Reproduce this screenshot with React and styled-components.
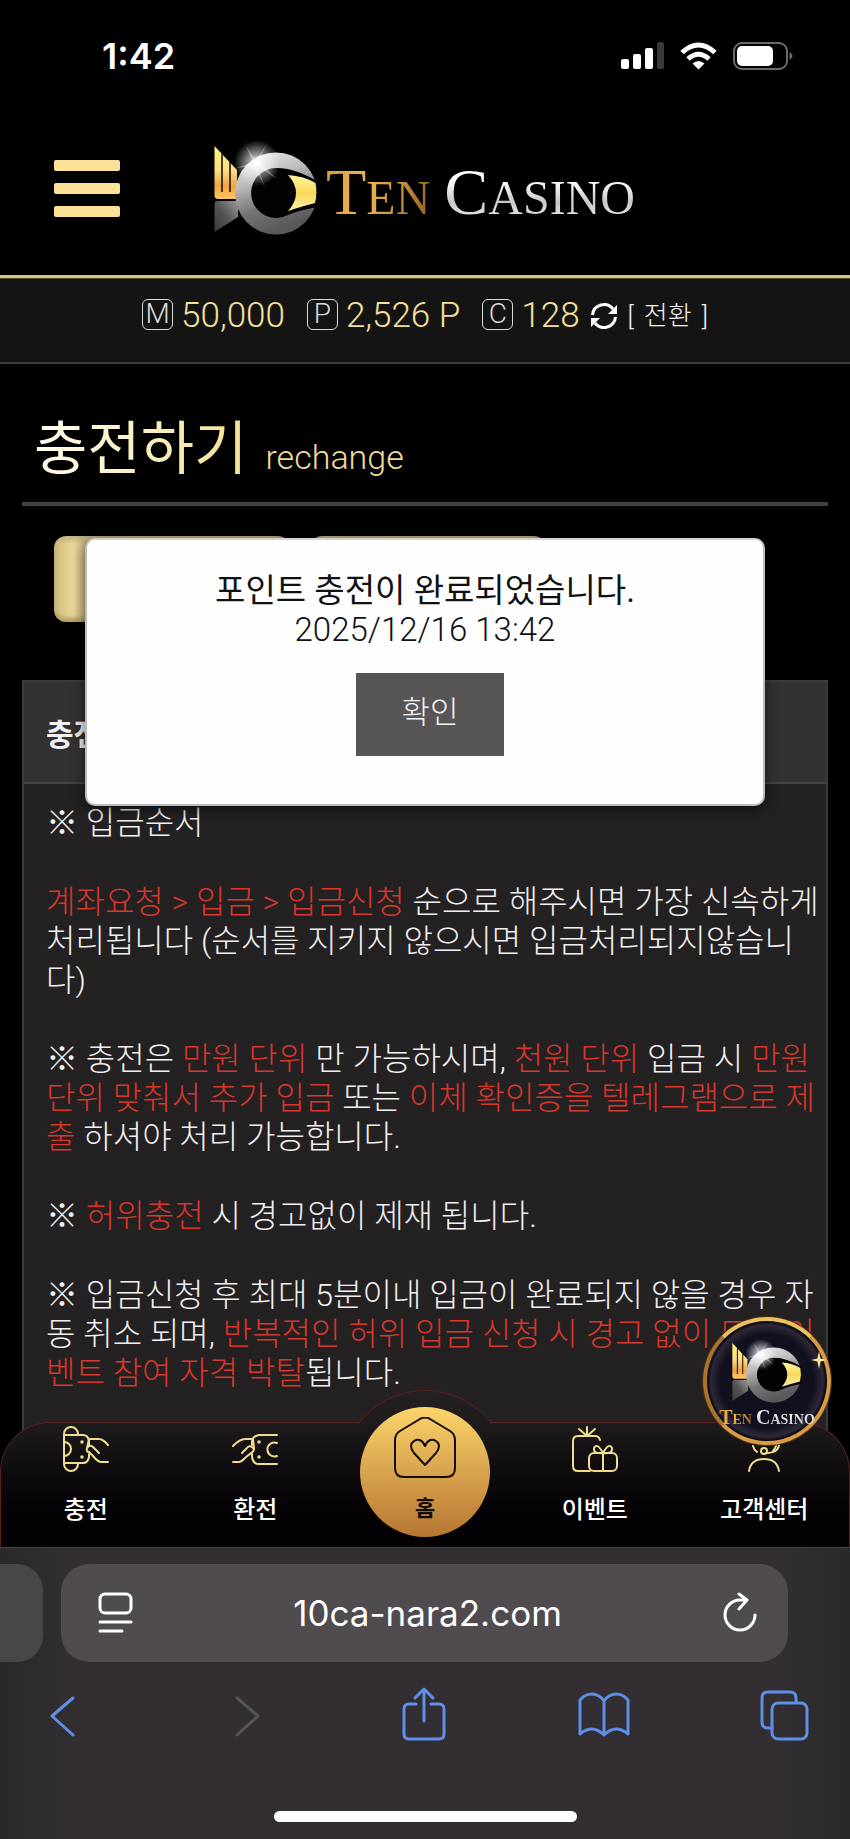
import React, { useId } from "react";
import styled, { createGlobalStyle, css } from "styled-components";

const Global = createGlobalStyle`
  *, *::before, *::after { box-sizing: border-box; }
  body { margin: 0; background: #000; }
  button { font: inherit; border: 0; padding: 0; background: none; color: inherit; cursor: pointer; }
  a { color: inherit; text-decoration: none; }
  h1, h2, p, dl, dd, dt { margin: 0; font-weight: inherit; font-size: inherit; }
  svg { display: block; }
`;

const korean = `"Noto Sans CJK KR", sans-serif`;
const latin = `Roboto, "Noto Sans CJK KR", sans-serif`;
const system = `Inter, sans-serif`;

const Page = styled.div`
  display: flex;
  flex-direction: column;
  min-height: 100vh;
  background: #000;
  color: #f2f0f1;
  font-family: ${korean};
`;

const Site = styled.div`
  position: relative;
  flex: 1;
  display: flex;
  flex-direction: column;
  overflow: hidden;
`;

/* ---------- phone status bar ---------- */
const StatusBar = styled.div`
  display: flex;
  align-items: center;
  justify-content: space-between;
  height: 112px;
  padding: 0 56px 0 102px;
  color: #fff;
  font: 600 36px/44px ${system};
`;

const StatusIcons = styled.div`
  display: flex;
  align-items: center;
  gap: 16px;
`;

/* ---------- site header ---------- */
const Header = styled.header`
  position: relative;
  display: flex;
  align-items: center;
  gap: 90px;
  height: 166px;
  padding: 0 54px 10px;
  border-bottom: 3px solid #d3c58a;
  box-shadow: 0 1px 0 #4d4529;
`;

const MenuButton = styled.button`
  display: flex;
  flex-direction: column;
  gap: 12px;
  width: 66px;
`;

const MenuBar = styled.span`
  height: 11px;
  border-radius: 2px;
  background: #fbe297;
`;

const Brand = styled.a`
  display: flex;
  align-items: center;
  gap: 4px;
`;

const BrandName = styled.span`
  display: flex;
  align-items: baseline;
  gap: ${(p) => (p.$small ? 4 : 14)}px;
  padding-top: ${(p) => (p.$small ? 0 : 12)}px;
  font-family: "Liberation Serif", serif;
  font-size: ${(p) => (p.$small ? 14 : 48)}px;
  font-weight: ${(p) => (p.$small ? 700 : 400)};
  line-height: ${(p) => (p.$small ? 20 : 66)}px;
  text-transform: uppercase;
  big { font-size: ${(p) => (p.$small ? 20 : 66)}px; }
`;

const BrandWord = styled.span`
  background: ${(p) =>
    p.$gold
      ? "linear-gradient(100deg, #d99a3a, #f1b750 40%, #93601f)"
      : "linear-gradient(180deg, #fff 30%, #c9c9cd 60%, #fff)"};
  background-clip: text;
  -webkit-background-clip: text;
  color: transparent;
`;

/* ---------- balances ---------- */
const BalanceBar = styled.dl`
  display: flex;
  align-items: center;
  justify-content: center;
  height: 86px;
  padding-bottom: 8px;
  background: #151415;
  border-bottom: 2px solid #3b3a3b;
  font-family: ${latin};
  font-weight: 300;
`;

const BalanceKey = styled.dt`
  display: flex;
  align-items: center;
  justify-content: center;
  width: 31px;
  height: 31px;
  margin-bottom: 4px;
  border: 1px solid #dcdadb;
  border-radius: 6px;
  color: #dcdadb;
  font-size: 28px;
  line-height: 28px;
`;

const BalanceValue = styled.dd`
  padding: 0 22px 0 8px;
  color: #f3e09a;
  font-size: 35px;
  line-height: 40px;
  font-weight: 300;
  &:last-of-type { padding-right: 10px; }
`;

const ConvertButton = styled.button`
  display: flex;
  align-items: center;
  gap: 10px;
  font-size: 26px;
  line-height: 36px;
  white-space: nowrap;
`;

/* ---------- page body ---------- */
const Main = styled.main`
  position: relative;
  flex: 1;
  display: flex;
  flex-direction: column;
  padding: 44px 22px 0;
`;

const TitleRow = styled.div`
  display: flex;
  align-items: baseline;
  gap: 18px;
  height: 98px;
  padding-left: 12px;
  border-bottom: 4px solid #424142;
`;

const Title = styled.h1`
  font-size: 58px;
  font-weight: 400;
  line-height: 72px;
  background: linear-gradient(90deg, #fffdf0, #f3e193);
  background-clip: text;
  -webkit-background-clip: text;
  color: transparent;
`;

const Subtitle = styled.span`
  color: #efdb9d;
  font-family: ${latin};
  font-size: 34px;
  font-weight: 300;
`;

const TabRow = styled.div`
  display: flex;
  gap: 20px;
  padding: 30px 32px 0;
`;

const Tab = styled.button`
  width: 236px;
  height: 86px;
  border-radius: 12px;
  background: linear-gradient(180deg, #bdb083, transparent 8px),
    linear-gradient(90deg, #cdbb7c, #ead898 8%, #cbb87c 14%, #ad9c62);
  box-shadow: inset 0 -4px 4px #b29f66;
`;

const Panel = styled.section`
  flex: 1;
  margin-top: 58px;
  border: 2px solid #3d3c3d;
  background: #232122;
`;

const PanelHeading = styled.h2`
  height: 102px;
  padding: 27px 22px;
  border-bottom: 2px solid #454344;
  background: #333132;
  font-size: 30px;
  font-weight: 700;
  line-height: 46px;
`;

const Rules = styled.div`
  display: flex;
  flex-direction: column;
  gap: 40px;
  padding: 20px 0 140px 22px;
  font-family: ${latin};
  font-size: 32px;
  font-weight: 300;
  line-height: 39px;
`;

const Mark = styled.span`
  color: #d8372b;
`;

/* ---------- confirmation ---------- */
const Dialog = styled.div`
  position: absolute;
  z-index: 2;
  top: 174px;
  left: 85px;
  right: 85px;
  height: 268px;
  padding: 31px 24px;
  border: 2px solid #bdbcbd;
  border-top-color: #d4d3d4;
  border-radius: 10px;
  background: #fefefe;
  box-shadow: 0 3px 14px rgba(0, 0, 0, 0.6);
  color: #111;
  font-family: ${latin};
  text-align: center;
`;

const DialogText = styled.p`
  font-size: 33px;
  line-height: 39px;
`;

const DialogTime = styled(DialogText)`
  font-weight: 300;
`;

const ConfirmButton = styled.button`
  width: 148px;
  height: 83px;
  margin: 24px 0 0 10px;
  padding-bottom: 4px;
  background: #575556;
  color: #f6f5f6;
  font-size: 31px;
  font-weight: 300;
  line-height: 40px;
`;

/* ---------- bottom navigation ---------- */
const BottomNav = styled.nav`
  position: absolute;
  z-index: 3;
  left: 0;
  right: 0;
  bottom: 0;
  display: flex;
  height: 125px;
  border: 1px solid #5b2024;
  border-bottom: 0;
  border-radius: 50px 50px 0 0;
  background: linear-gradient(180deg, #1d1b1c, #0c090c 45%, #040104 75%);
`;

const Hump = styled.span`
  position: absolute;
  top: -33px;
  left: calc(50% - 84px);
  width: 168px;
  height: 34px;
  overflow: hidden;
  &::before {
    content: "";
    display: block;
    height: 168px;
    border: 1px solid #5b2024;
    border-radius: 50%;
    background: linear-gradient(180deg, #232122, #1d1b1c 34px);
  }
`;

const NavLink = styled.a`
  position: relative;
  flex: 1;
  display: flex;
  flex-direction: column;
  align-items: center;
  gap: 18px;
  padding-top: 3px;
  color: #fff;
  font-size: 24px;
  font-weight: 500;
  line-height: 36px;
  ${(p) =>
    p.$home &&
    css`
      flex: 0 0 130px;
      height: 130px;
      margin: -16px 20px 0;
      padding-top: 10px;
      gap: 10px;
      border-radius: 50%;
      background: linear-gradient(180deg, #fbd56b, #dca850 45%, #b67632);
      color: #140c04;
      font-size: 22px;
      font-weight: 700;
      line-height: 34px;
    `}
`;

const Badge = styled.a`
  position: absolute;
  z-index: 4;
  right: 19px;
  bottom: 102px;
  display: flex;
  flex-direction: column;
  align-items: center;
  gap: 2px;
  width: 128px;
  height: 128px;
  padding-top: 18px;
  border-radius: 50%;
  border: 4px solid #d79a45;
  border-top-color: #e8c163;
  border-left-color: #a9742c;
  background: radial-gradient(circle, #10101f 55%, #2e2838 66%, #0b0910 70%);
  box-shadow: 0 0 0 1px #4a2e12;
`;

const Sparkle = styled.span`
  position: absolute;
  right: 0;
  top: 30px;
`;

/* ---------- browser chrome ---------- */
const Browser = styled.footer`
  display: flex;
  flex-direction: column;
  height: 292px;
  border-top: 1px solid #454345;
  background: linear-gradient(90deg, #2a282b, #322e31 8%, #322e31 92%, #29282b);
`;

const AddressRow = styled.div`
  display: flex;
  gap: 18px;
  padding: 16px 62px 0 0;
`;

const PreviousTab = styled.span`
  width: 43px;
  height: 98px;
  border-radius: 0 26px 26px 0;
  background: #494649;
`;

const AddressBar = styled.div`
  flex: 1;
  display: flex;
  align-items: center;
  justify-content: space-between;
  height: 98px;
  padding: 0 30px 0 36px;
  border-radius: 28px;
  background: #4f4b4e;
  color: #fff;
`;

const Address = styled.span`
  font: 400 35px/44px ${system};
`;

const Toolbar = styled.div`
  display: flex;
  justify-content: space-between;
  padding: 23px 40px 0 38px;
  color: #5f8fe8;
`;

const HomeIndicator = styled.span`
  width: 303px;
  height: 11px;
  margin: 66px auto 0;
  border-radius: 6px;
  background: #fff;
`;

/* ---------- drawings ---------- */
function FishLogo({ width, height }) {
  const id = useId().replace(/:/g, "");
  return (
    <svg width={width} height={height} viewBox="0 0 112 98" aria-hidden="true">
      <defs>
        <linearGradient id={id + "g"} x1="0" y1="0" x2="0" y2="1">
          <stop offset="0" stopColor="#fff36b" />
          <stop offset=".45" stopColor="#fbe08a" />
          <stop offset=".75" stopColor="#f0a444" />
          <stop offset="1" stopColor="#ffc860" />
        </linearGradient>
        <linearGradient id={id + "s"} x1="0" y1="0" x2=".35" y2="1">
          <stop offset="0" stopColor="#f2f2f2" />
          <stop offset=".4" stopColor="#bbb" />
          <stop offset=".7" stopColor="#777577" />
          <stop offset="1" stopColor="#5a585a" />
        </linearGradient>
        <linearGradient id={id + "t"} x1="1" y1="0" x2="0" y2="1">
          <stop offset="0" stopColor="#999" />
          <stop offset=".5" stopColor="#555" />
          <stop offset="1" stopColor="#3a3a3a" />
        </linearGradient>
        <linearGradient id={id + "y"} x1="0" y1="0" x2="0" y2="1">
          <stop offset="0" stopColor="#fff59a" />
          <stop offset=".5" stopColor="#f8d85e" />
          <stop offset="1" stopColor="#fff0a8" />
        </linearGradient>
        <radialGradient id={id + "r"}>
          <stop offset="0" stopColor="#fff" />
          <stop offset=".35" stopColor="#fff" stopOpacity=".6" />
          <stop offset="1" stopColor="#fff" stopOpacity="0" />
        </radialGradient>
      </defs>
      <path d="M4.500 6 27 30V59H8q-3.500 0-3.500-4Z" fill={`url(#${id}g)`} />
      <path d="M12 14V52M20 22V52" stroke="#120a00" strokeWidth="1.500" />
      <path d="M4.500 64q0-3 3-3H28V77L4.500 92Z" fill={`url(#${id}t)`} />
      <circle cx="66" cy="53.500" r="41" fill={`url(#${id}s)`} />
      <path d="M67 28 Q84 28 107 41V67Q90 70 78 75A25 25 0 1 1 67 28Z" fill="#020202" />
      <path d="M78 35Q94 36 105.500 43 107.500 53 105 63 93 66 78 71 94 53 78 35Z" fill={`url(#${id}y)`} />
      <circle cx="47" cy="23" r="23" fill={`url(#${id}r)`} />
      <path d="M57 4 48 21 67 39 47 26 55 47 44 26 26 28 43 22 36 6 46 20Z" fill="#fff" opacity=".35" />
    </svg>
  );
}

const Stroke = ({ size = 46, width, height, color = "#f0dd8f", weight = 2, children }) => (
  <svg
    width={width || size}
    height={height || size}
    viewBox={`0 0 ${width || size} ${height || size}`}
    fill="none"
    stroke={color}
    strokeWidth={weight}
    strokeLinecap="round"
    strokeLinejoin="round"
    aria-hidden="true"
  >
    {children}
  </svg>
);

const SignalIcon = () => (
  <svg width="43" height="28" viewBox="0 0 43 28" aria-hidden="true">
    <rect x="0" y="17" width="8" height="10" rx="2" fill="#fff" />
    <rect x="12" y="12" width="8" height="15" rx="2" fill="#fff" />
    <rect x="24" y="6" width="8" height="21" rx="2" fill="#fff" />
    <rect x="36" y="0" width="7" height="27" rx="2" fill="#3a3a3a" />
  </svg>
);

const WifiIcon = () => (
  <svg width="37" height="28" viewBox="0 0 37 28" aria-hidden="true">
    <g fill="none" stroke="#fff" strokeWidth="5">
      <path d="M2 10.500Q18.500-4.500 35 10.500" />
      <path d="M8 17Q18.500 7.500 29 17" />
    </g>
    <path d="M12.500 21.500Q18.500 16.500 24.500 21.500L18.500 27.500Z" fill="#fff" />
  </svg>
);

const BatteryIcon = () => (
  <svg width="61" height="28" viewBox="0 0 61 28" aria-hidden="true">
    <rect x="1" y="1" width="53" height="26" rx="8" fill="none" stroke="#6a6a6a" strokeWidth="2" />
    <rect x="4" y="4" width="36" height="20" rx="5" fill="#fff" />
    <path d="M56.500 10v8q3-1.500 3-4t-3-4Z" fill="#6a6a6a" />
  </svg>
);

const RefreshIcon = () => (
  <svg width="28" height="28" viewBox="0 0 28 28" aria-hidden="true">
    <g fill="none" stroke="#fff" strokeWidth="3">
      <path d="M2.500 13A11.500 11.500 0 0 1 23 7" />
      <path d="M25.500 15A11.500 11.500 0 0 1 5 21" />
    </g>
    <path d="M27 3V12H18ZM1 25V16H10Z" fill="#fff" />
  </svg>
);

const DepositIcon = () => (
  <Stroke>
    <path d="M1 8A7 7 0 0 1 15 8V9H1ZM1 38A7 7 0 0 0 15 38V37H1ZM1 8V38" />
    <path d="M15 9H20Q25 9 26 15V19M26 28V31Q25 37 20 37H15M1 16A7 7 0 0 1 1 30" />
    <path d="M26 13H36Q40 13 45 19M26 13 24 22Q23 26 26 26L30 30Q35 36 38 36H45M24 22Q27 18 30 21L36 27" />
    <circle cx="19" cy="16" r=".8" />
    <circle cx="19" cy="31" r=".8" />
  </Stroke>
);

const WithdrawIcon = () => (
  <Stroke>
    <path d="M45 9H27Q20 10 20 16V19M20 28V31Q21 38 27 38H45M45 17A7 7 0 1 0 45 30" />
    <path d="M1 20Q8 13 13 13H21L22 22Q22 26 19 27L13 32Q9 36 7 36H1M22 23Q18 18 15 22L10 27" />
    <circle cx="27" cy="16" r=".8" />
    <circle cx="27" cy="31" r=".8" />
  </Stroke>
);

const HomeIcon = () => (
  <Stroke width={62} height={62} color="#140c04">
    <path d="M26 2Q31-1 36 2L56 14Q61 17 61 23V51Q61 60 52 60H10Q1 60 1 51V23Q1 17 6 14Z" />
    <path d="M31 48 20 36Q14 28 20 24 27 20 31 29 35 20 42 24 48 28 42 36Z" />
  </Stroke>
);

const EventIcon = () => (
  <Stroke>
    <path d="M15 1V10M7 3 15 10 23 3" />
    <path d="M18 45H6Q1 45 1 40V15Q1 10 6 10H23Q27 10 28 14" />
    <rect x="17" y="27" width="28" height="18" rx="5" />
    <path d="M31 27V45M31 27Q21 28 22 22 25 16 31 27 37 16 40 22 41 28 31 27" />
  </Stroke>
);

const SupportIcon = () => (
  <Stroke>
    <path d="M8 45Q10 33 23 33T38 45M10 14Q10 2 23 2T36 14V18M12 20Q13 24 16 26M38 19Q37 27 25 27" />
    <circle cx="23" cy="25" r="3" />
    <path d="M35 20Q34 23 32 25" />
  </Stroke>
);

const Brandmark = ({ small }) => (
  <BrandName $small={small}>
    <BrandWord $gold><big>T</big>en</BrandWord>
    <BrandWord><big>C</big>asino</BrandWord>
  </BrandName>
);

const balances = [
  ["M", "50,000"],
  ["P", "2,526 P"],
  ["C", "128"],
];

export default function App() {
  return (
    <Page>
      <Global />
      <Site>
        <StatusBar>
          <span>1:42</span>
          <StatusIcons>
            <SignalIcon />
            <WifiIcon />
            <BatteryIcon />
          </StatusIcons>
        </StatusBar>

        <Header>
          <MenuButton aria-label="메뉴">
            <MenuBar />
            <MenuBar />
            <MenuBar />
          </MenuButton>
          <Brand href="#">
            <FishLogo width={112} height={98} />
            <Brandmark />
          </Brand>
        </Header>

        <BalanceBar>
          {balances.map(([key, value]) => (
            <React.Fragment key={key}>
              <BalanceKey>{key}</BalanceKey>
              <BalanceValue>{value}</BalanceValue>
            </React.Fragment>
          ))}
          <ConvertButton>
            <RefreshIcon />
            <span>[</span>
            <span>전환</span>
            <span>]</span>
          </ConvertButton>
        </BalanceBar>

        <Main>
          <TitleRow>
            <Title>충전하기</Title>
            <Subtitle>rechange</Subtitle>
          </TitleRow>
          <TabRow>
            <Tab aria-label="충전" />
            <Tab aria-label="환전" />
          </TabRow>
          <Panel>
            <PanelHeading>충전</PanelHeading>
            <Rules>
              <p>※ 입금순서</p>
              <p>
                <Mark>계좌요청 &gt; 입금 &gt; 입금신청</Mark> 순으로 해주시면 가장 신속하게 처리됩니다
                (순서를 지키지 않으시면 입금처리되지않습니다)
              </p>
              <p>
                ※ 충전은 <Mark>만원 단위</Mark> 만 가능하시며, <Mark>천원 단위</Mark> 입금 시{" "}
                <Mark>만원 단위 맞춰서 추가 입금</Mark> 또는{" "}
                <Mark>이체 확인증을 텔레그램으로 제출</Mark> 하셔야 처리 가능합니다.
              </p>
              <p>
                ※ <Mark>허위충전</Mark> 시 경고없이 제재 됩니다.
              </p>
              <p>
                ※ 입금신청 후 최대 5분이내 입금이 완료되지 않을 경우 자동 취소 되며,{" "}
                <Mark>반복적인 허위 입금 신청 시 경고 없이 모든 이벤트 참여 자격 박탈</Mark>됩니다.
              </p>
            </Rules>
          </Panel>

          <Dialog role="dialog" aria-label="충전 완료">
            <DialogText>포인트 충전이 완료되었습니다.</DialogText>
            <DialogTime>2025/12/16 13:42</DialogTime>
            <ConfirmButton>확인</ConfirmButton>
          </Dialog>
        </Main>

        <BottomNav>
          <Hump />
          <NavLink href="#"><DepositIcon />충전</NavLink>
          <NavLink href="#"><WithdrawIcon />환전</NavLink>
          <NavLink href="#" $home><HomeIcon />홈</NavLink>
          <NavLink href="#"><EventIcon />이벤트</NavLink>
          <NavLink href="#"><SupportIcon />고객센터</NavLink>
        </BottomNav>

        <Badge href="#">
          <FishLogo width={76} height={66} />
          <Brandmark small />
          <Sparkle>
            <svg width="16" height="18" viewBox="0 0 16 18" aria-hidden="true">
              <path d="M8 0 9.500 7.500 16 9 9.500 10.500 8 18 6.500 10.500 0 9 6.500 7.500Z" fill="#ffe7a0" />
            </svg>
          </Sparkle>
        </Badge>
      </Site>

      <Browser>
        <AddressRow>
          <PreviousTab />
          <AddressBar>
            <button aria-label="페이지 메뉴">
              <Stroke width={36} height={42} color="#fff" weight={3}>
                <rect x="3" y="2" width="31" height="19" rx="5" />
                <path d="M3 30H34M3 39H25" />
              </Stroke>
            </button>
            <Address>10ca-nara2.com</Address>
            <button aria-label="새로고침">
              <Stroke width={36} height={42} color="#fff" weight={3}>
                <path d="M18 8A15 15 0 1 0 33 23M18 8H25M17 2 25 8 17 17" />
              </Stroke>
            </button>
          </AddressBar>
        </AddressRow>
        <Toolbar>
          <button aria-label="뒤로">
            <Stroke width={50} height={60} color="#5f8fe8" weight={3}>
              <path d="M35 13 14 31 35 50" />
            </Stroke>
          </button>
          <button aria-label="앞으로">
            <Stroke width={50} height={60} color="#585558" weight={3}>
              <path d="M19 13 40 31 19 50" />
            </Stroke>
          </button>
          <button aria-label="공유">
            <Stroke width={50} height={60} color="#5f8fe8" weight={3}>
              <path d="M18 19H11Q6 19 6 24V49Q6 54 11 54H41Q46 54 46 49V24Q46 19 41 19H33M26 36V5M17 13 26 4 35 13" />
            </Stroke>
          </button>
          <button aria-label="책갈피">
            <Stroke width={52} height={60} color="#5f8fe8" weight={3}>
              <path d="M26 16Q21 9 14 9 7 9 2 15V49Q8 44 14 44T26 50Q32 44 38 44T50 49V15Q45 9 38 9 31 9 26 16V50" />
            </Stroke>
          </button>
          <button aria-label="탭">
            <Stroke width={50} height={60} color="#5f8fe8" weight={3}>
              <path d="M12 43H8Q2 43 2 37V13Q2 7 8 7H30Q36 7 36 13V17" />
              <rect x="12" y="18" width="35" height="36" rx="6" />
            </Stroke>
          </button>
        </Toolbar>
        <HomeIndicator />
      </Browser>
    </Page>
  );
}
